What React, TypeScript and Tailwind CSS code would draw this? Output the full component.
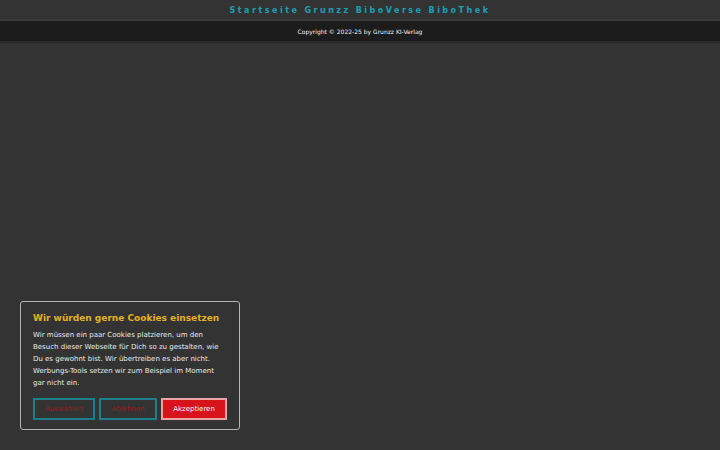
export default function App() {
  const links = ["Startseite", "Grunzz", "BiboVerse", "BiboThek"];

  return (
    <main className="relative w-[720px] h-[450px] bg-[#333333] overflow-hidden font-['DejaVu_Sans',sans-serif]">
      {/* Navigation */}
      <nav className="h-[17px] pt-[2px] flex justify-center items-center gap-[5px] border-b-[2px] border-[#3a3a3a] box-content">
        {links.map((l) => (
          <a key={l} className="text-[8px] font-bold tracking-[2.5px] text-[#1b9fb3] leading-none">
            {l}
          </a>
        ))}
      </nav>

      {/* Copyright-Leiste */}
      <div className="h-[20px] bg-[#1c1c1c] flex justify-center items-center border-b-[2px] border-[#2b2b2b] box-content">
        <span className="text-[6px] text-[#f0f0f0]">Copyright © 2022-25 by Grunzz KI-Verlag</span>
      </div>

      {/* Cookie-Banner */}
      <div className="absolute left-[20px] bottom-[20px] w-[220px] border border-[#b4b4b4] rounded-[3px] bg-[#333333] px-[12px] pt-[9px] pb-[9px]">
        <h2 className="text-[9px] font-bold text-[#e5b21c] leading-[14px] mb-[4px]">Wir würden gerne Cookies einsetzen</h2>
        <p className="text-[7px] leading-[12px] text-[#e8e8e8]">
          Wir müssen ein paar Cookies platzieren, um den Besuch dieser Webseite für Dich so zu gestalten, wie Du es gewohnt bist. Wir übertreiben es aber nicht. Werbungs-Tools setzen wir zum Beispiel im Moment gar nicht ein.
        </p>
        <div className="flex gap-[4px] mt-[9px]">
          <button className="w-[62px] h-[22px] border-2 border-[#1e7f8c] text-[#9a1c1c] text-[7px]">Auswählen</button>
          <button className="w-[58px] h-[22px] border-2 border-[#1e7f8c] text-[#9a1c1c] text-[7px]">Ablehnen</button>
          <button className="w-[66px] h-[22px] border-2 border-[#e9a3a3] bg-[#d8121b] text-[#f5f5f5] text-[7px]">Akzeptieren</button>
        </div>
      </div>
    </main>
  );
}
